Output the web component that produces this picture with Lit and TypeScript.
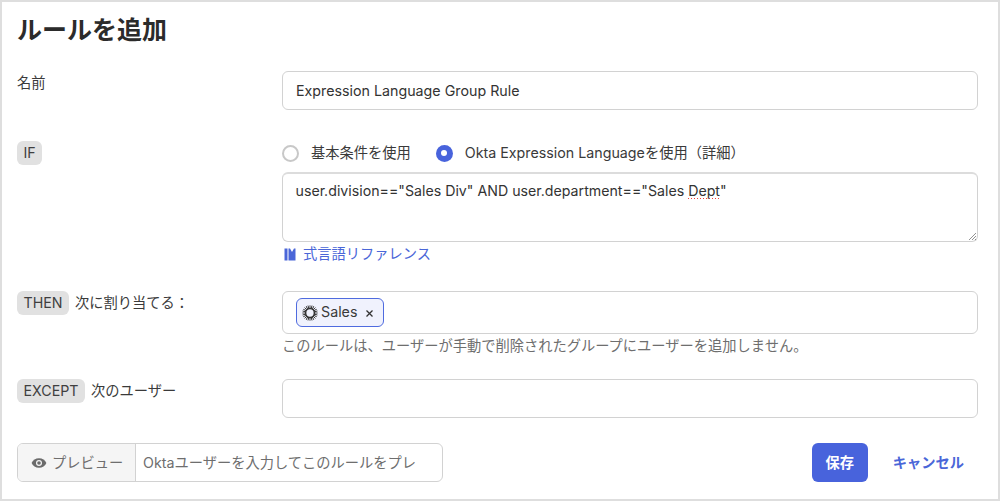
import { LitElement, html, css, svg } from "lit";
import { customElement } from "lit/decorators.js";

@customElement("app-root")
export class AppRoot extends LitElement {
  static styles = css`
    :host {
      display: block;
      width: 1000px;
      height: 501px;
      box-sizing: border-box;
      border: 2px solid #dedede;
      background: #fff;
      color: #3a3a3a;
      font-family: Inter, "Noto Sans CJK JP", sans-serif;
      font-size: 14.25px;
      line-height: 20px;
      overflow: hidden;
    }
    .page { padding: 0 20px 0 15px; }
    h1 {
      margin: 0;
      padding-top: 13px;
      box-sizing: border-box;
      height: 69px;
      font-size: 25px;
      line-height: 30px;
      font-weight: 700;
      color: #2b2b2b;
    }
    .row {
      display: grid;
      grid-template-columns: 265px 696px;
    }
    .name { height: 70px; }
    .if { height: 150px; }
    .then { height: 88px; }
    .except { height: 64px; }
    .label {
      display: flex;
      align-items: flex-start;
      gap: 6px;
    }
    .plain { padding-top: 2px; }
    .pill {
      height: 24px;
      line-height: 24px;
      padding: 0 6.5px;
      border-radius: 6px;
      background: #e1e1e1;
      color: #3f3f3f;
    }
    .after { line-height: 24px; }
    .field {
      box-sizing: border-box;
      border: 1px solid #d2d2d2;
      border-radius: 6px;
      height: 39px;
      padding: 0 13px;
      display: flex;
      align-items: center;
      color: #333;
    }
    .radios {
      display: flex;
      align-items: center;
      height: 24px;
      margin-bottom: 7px;
    }
    .radio {
      box-sizing: border-box;
      width: 17px;
      height: 17px;
      border-radius: 50%;
      border: 2px solid #c8c8c8;
      margin-right: 12px;
    }
    .radio.on {
      border: 0;
      background: #4863dc;
      display: flex;
      align-items: center;
      justify-content: center;
      margin-left: 25px;
    }
    .radio.on::after {
      content: "";
      width: 6px;
      height: 6px;
      border-radius: 50%;
      background: #fff;
    }
    .area {
      position: relative;
      box-sizing: border-box;
      height: 70px;
      border: 1px solid #d2d2d2;
      border-top: 2px solid #dcdcdc;
      border-radius: 6px;
      padding: 7px 12.5px;
      color: #333;
      font-size: 14.2px;
    }
    .dept {
      background-image: linear-gradient(90deg, #f0403c 50%, transparent 50%);
      background-size: 3px 1px;
      background-repeat: repeat-x;
      background-position: 0 100%;
    }
    .grip {
      position: absolute;
      right: 1px;
      bottom: 1px;
      width: 8px;
      height: 8px;
    }
    .link {
      display: flex;
      align-items: center;
      gap: 7px;
      margin: 2px 0 0 2px;
      height: 20px;
      color: #4a66d8;
    }
    .tags {
      height: 43px;
      padding: 0 13px;
    }
    .tag {
      box-sizing: border-box;
      display: flex;
      align-items: center;
      height: 29px;
      width: 88px;
      border: 1px solid #4f6bdf;
      border-radius: 6px;
      background: #f0f2fd;
      padding: 0 5px;
      gap: 3px;
      color: #3a3a3a;
    }
    .tag-text { margin-bottom: 2px; }
    .x { margin-left: 5px; width: 9px; height: 9px; margin-top: 2px; }
    .hint { margin-top: 2px; color: #6e6e6e; }
    .foot {
      display: flex;
      align-items: flex-start;
    }
    .preview {
      box-sizing: border-box;
      display: flex;
      width: 426px;
      height: 39px;
      border: 1px solid #d2d2d2;
      border-radius: 6px;
      overflow: hidden;
    }
    .pv-btn {
      display: flex;
      align-items: center;
      gap: 5px;
      width: 118px;
      flex: none;
      padding-left: 13px;
      box-sizing: border-box;
      background: #f5f5f5;
      border-right: 1px solid #d2d2d2;
      color: #6e6e6e;
    }
    .pv-in {
      display: flex;
      align-items: center;
      padding-left: 7px;
      color: #6e6e6e;
      white-space: nowrap;
    }
    .save {
      margin-left: auto;
      width: 56px;
      height: 39px;
      border-radius: 6px;
      background: #4863dc;
      color: #fff;
      font-weight: 700;
      display: flex;
      align-items: center;
      justify-content: center;
    }
    .cancel {
      margin: 0 14px 0 25px;
      height: 39px;
      display: flex;
      align-items: center;
      color: #4a66d8;
      font-weight: 700;
    }
  `;

  private sunburst() {
    const rays = Array.from({ length: 24 }, (_, i) => (i * 360) / 24);
    return html`<svg width="16" height="16" viewBox="0 0 16 16">
      ${rays.map(
        (a) => svg`<line x1="8" y1="0.3" x2="8" y2="3.6" stroke="#333" stroke-width="0.9" transform="rotate(${a} 8 8)"></line>`
      )}
      <circle cx="8" cy="8" r="4.4" fill="none" stroke="#333" stroke-width="1.5"></circle>
    </svg>`;
  }

  render() {
    return html`<div class="page">
      <h1>ルールを追加</h1>
      <div class="row name">
        <div class="label plain">名前</div>
        <div class="field">Expression Language Group Rule</div>
      </div>
      <div class="row if">
        <div class="label"><span class="pill">IF</span></div>
        <div>
          <div class="radios">
            <span class="radio"></span><span>基本条件を使用</span>
            <span class="radio on"></span><span>Okta Expression Languageを使用（詳細）</span>
          </div>
          <div class="area">
            user.division=="Sales Div" AND user.department=="Sales <span class="dept">Dept</span>"
            <svg class="grip" viewBox="0 0 8 8"><path d="M1 8L8 1M4 8L8 4M7 8L8 7" stroke="#777" stroke-width="0.8" fill="none"></path></svg>
          </div>
          <div class="link">
            <svg width="12" height="13" viewBox="0 0 12 13"><path d="M0.500 0.500H3.500V12.500H0.500ZM4.500 0.500H6L8 4L10 0.500H11.500V12.500H4.500Z" fill="#4a66d8"></path></svg>
            <span>式言語リファレンス</span>
          </div>
        </div>
      </div>
      <div class="row then">
        <div class="label"><span class="pill">THEN</span><span class="after">次に割り当てる：</span></div>
        <div>
          <div class="field tags">
            <div class="tag">${this.sunburst()}<span class="tag-text">Sales</span>
              <svg class="x" viewBox="0 0 9 9"><path d="M1.500 1.500L7.500 7.500M7.500 1.500L1.500 7.500" stroke="#333" stroke-width="1.300" fill="none"></path></svg>
            </div>
          </div>
          <div class="hint">このルールは、ユーザーが手動で削除されたグループにユーザーを追加しません。</div>
        </div>
      </div>
      <div class="row except">
        <div class="label"><span class="pill">EXCEPT</span><span class="after">次のユーザー</span></div>
        <div class="field"></div>
      </div>
      <div class="foot">
        <div class="preview">
          <div class="pv-btn">
            <svg width="16" height="12" viewBox="0 0 16 12"><path d="M8 1.200C4.600 1.200 1.900 3.200 0.600 6C1.900 8.800 4.600 10.800 8 10.800S14.100 8.800 15.400 6C14.100 3.200 11.400 1.200 8 1.200Z" fill="#6b6b6b"></path><circle cx="8" cy="6" r="3" fill="#f5f5f5"></circle><circle cx="8" cy="6" r="1.800" fill="#6b6b6b"></circle></svg>
            <span>プレビュー</span>
          </div>
          <div class="pv-in">Oktaユーザーを入力してこのルールをプレ</div>
        </div>
        <div class="save">保存</div>
        <div class="cancel">キャンセル</div>
      </div>
    </div>`;
  }
}
